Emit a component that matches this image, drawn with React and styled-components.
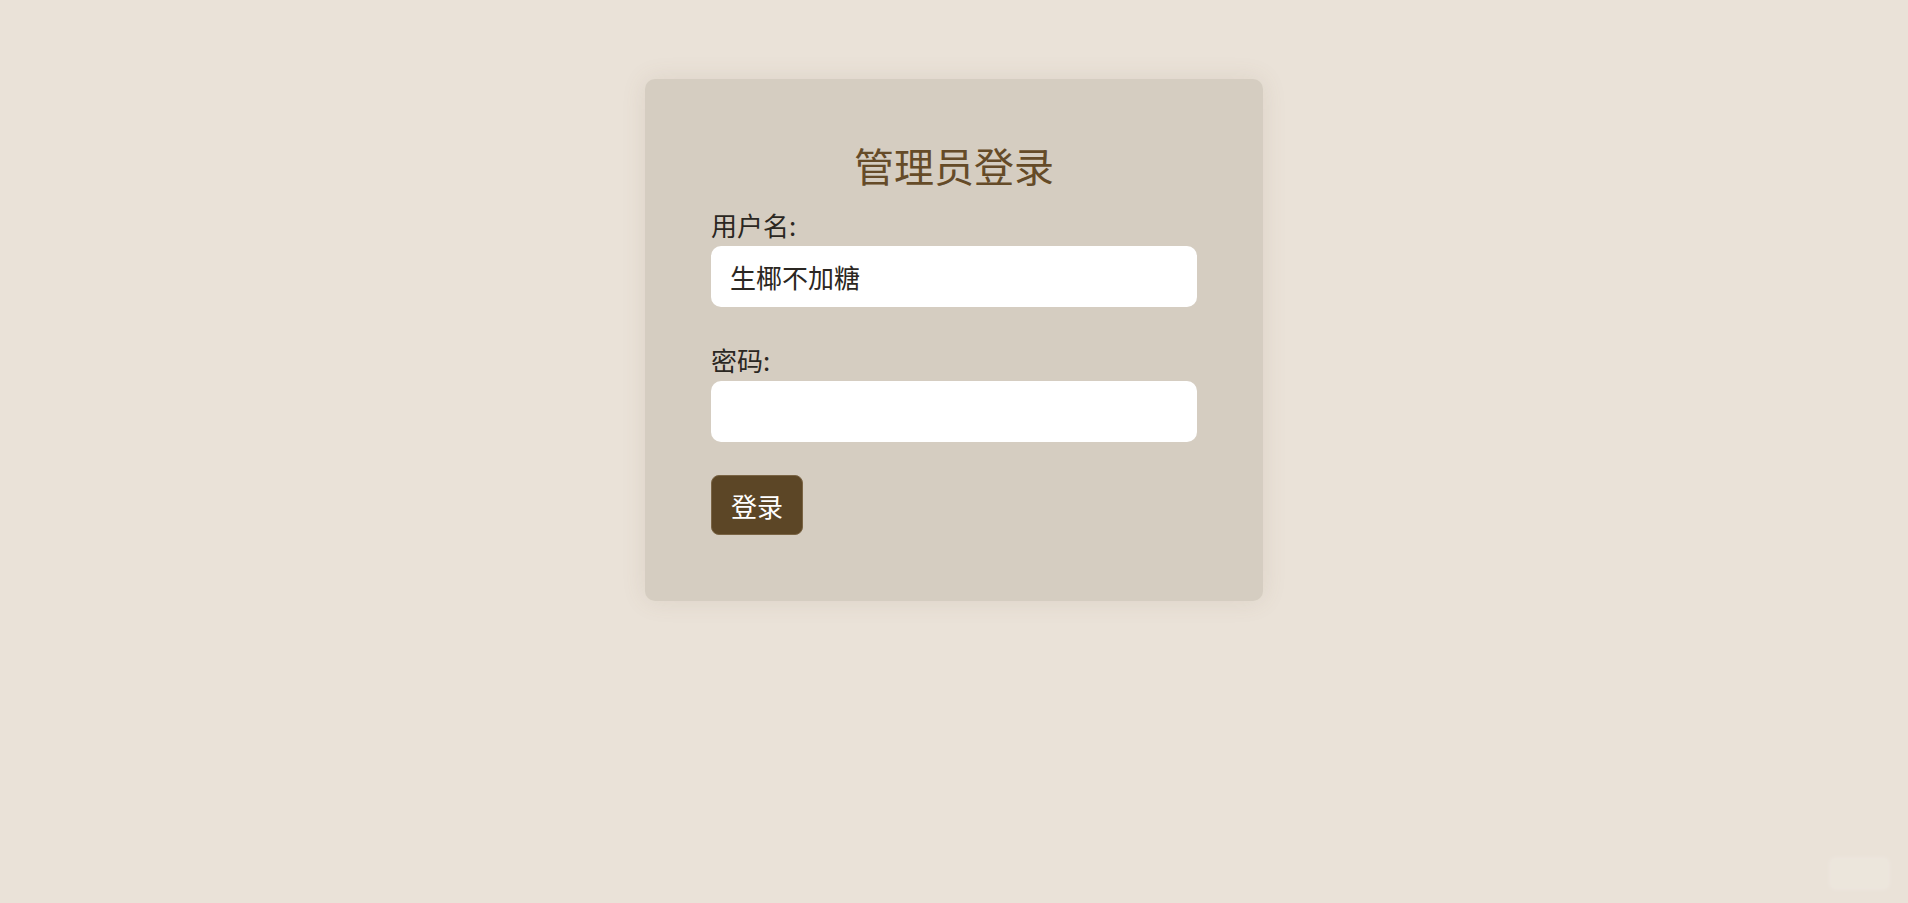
import React from 'react';
import styled, { createGlobalStyle } from 'styled-components';

const GlobalStyle = createGlobalStyle`
  html, body {
    margin: 0;
    padding: 0;
    background-color: #eae2d8;
  }
  body {
    font-family: "Noto Sans CJK SC", "Noto Sans", sans-serif;
  }
  * {
    box-sizing: border-box;
  }
`;

function App() {
  return (
    <>
      <GlobalStyle />
      <Page>
        <Card>
          <Title>管理员登录</Title>
          <Form onSubmit={(e) => e.preventDefault()}>
            <Field>
              <Label htmlFor="username">用户名:</Label>
              <Input id="username" type="text" defaultValue="生椰不加糖" />
            </Field>
            <Field last>
              <Label htmlFor="password">密码:</Label>
              <Input id="password" type="password" />
            </Field>
            <SubmitBtn type="submit">登录</SubmitBtn>
          </Form>
        </Card>
        <Corner />
      </Page>
    </>
  );
}

export default App;

const Page = styled.div`
  position: relative;
  min-height: 903px;
  display: flex;
  justify-content: center;
  align-items: flex-start;
  padding-top: 79px;
  background-color: #eae2d8;
`;

const Card = styled.div`
  width: 618px;
  padding: 62px 66px 66px;
  background-color: #d5cdc1;
  border-radius: 10px;
  box-shadow: 0 0 24px rgba(120, 100, 70, 0.12);
`;

const Title = styled.h2`
  margin: 0 0 20px;
  text-align: center;
  font-size: 40px;
  font-weight: 400;
  line-height: 1.2;
  color: #654b28;
`;

const Form = styled.form`
  display: flex;
  flex-direction: column;
  align-items: flex-start;
`;

const Field = styled.div`
  width: 100%;
  display: flex;
  flex-direction: column;
  gap: 6px;
  margin-bottom: ${(p) => (p.last ? '33px' : '37px')};
`;

const Label = styled.label`
  font-size: 26px;
  line-height: 1.2;
  color: #2b2722;
`;

const Input = styled.input`
  width: 100%;
  height: 61px;
  padding: 0 19px;
  border: none;
  outline: none;
  border-radius: 10px;
  background: #ffffff;
  font-family: "Noto Sans CJK SC", "Noto Sans", sans-serif;
  font-size: 26px;
  color: #2b2722;
`;

const SubmitBtn = styled.button`
  height: 60px;
  padding: 0 19px;
  border: 1px solid #7a6444;
  border-radius: 8px;
  background-color: #5c4626;
  font-family: "Noto Sans CJK SC", "Noto Sans", sans-serif;
  font-size: 26px;
  color: #ffffff;
  cursor: pointer;
`;

const Corner = styled.div`
  position: absolute;
  right: 20px;
  bottom: 15px;
  width: 57px;
  height: 29px;
  border-radius: 4px;
  background-color: #ece6dc;
  box-shadow: 0 0 6px rgba(255, 255, 255, 0.3);
`;
